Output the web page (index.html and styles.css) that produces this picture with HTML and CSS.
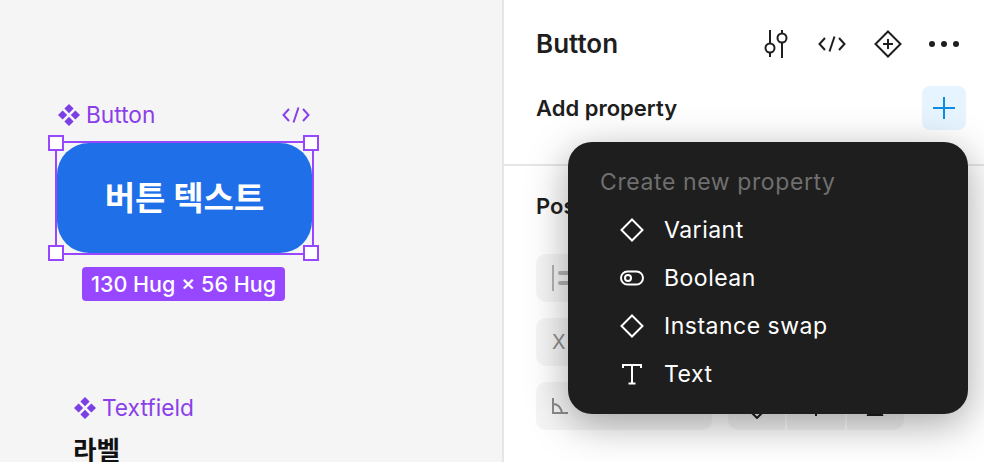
FILE: index.html
```html
<!DOCTYPE html>
<html lang="ko">
<head>
  <meta charset="UTF-8">
  <meta name="viewport" content="width=device-width, initial-scale=1.0">
  <title>Button</title>
  <link rel="stylesheet" href="styles.css">
</head>
<body>
  <!-- Canvas -->
  <main class="canvas">
    <div class="node-label button-label">
      <svg class="comp-icon" viewBox="0 0 22 22"><path d="M11 0l4.600 4.600L11 9.200 6.400 4.600zM4.600 6.400L9.200 11l-4.600 4.600L0 11zM17.400 6.400L22 11l-4.600 4.600L12.800 11zM11 12.800l4.600 4.600L11 22l-4.600-4.600z"/></svg>
      <span>Button</span>
    </div>
    <svg class="node-code" viewBox="0 0 28 18"><path d="M7 3L1.500 9 7 15M21 3l5.500 6L21 15M16.500 1.500l-5 15"/></svg>

    <div class="selection">
      <button class="blue-button">버튼 텍스트</button>
      <span class="handle tl"></span>
      <span class="handle tr"></span>
      <span class="handle bl"></span>
      <span class="handle br"></span>
    </div>
    <div class="size-tag">130 Hug × 56 Hug</div>

    <div class="node-label field-label">
      <svg class="comp-icon" viewBox="0 0 22 22"><path d="M11 0l4.600 4.600L11 9.200 6.400 4.600zM4.600 6.400L9.200 11l-4.600 4.600L0 11zM17.400 6.400L22 11l-4.600 4.600L12.800 11zM11 12.800l4.600 4.600L11 22l-4.600-4.600z"/></svg>
      <span>Textfield</span>
    </div>
    <div class="field-title">라벨</div>
  </main>

  <!-- Right panel -->
  <aside class="panel">
    <header class="panel-head">
      <h1>Button</h1>
      <div class="tools">
        <span class="tool"><svg width="28" height="30" viewBox="0 0 28 30"><path d="M8 1v13M8 24v4M20 1v3M20 14v15"/><circle cx="8" cy="19" r="4.500"/><circle cx="20" cy="9" r="4.500"/></svg></span>
        <span class="tool"><svg width="28" height="18" viewBox="0 0 28 18"><path d="M7 3L1.500 9 7 15M21 3l5.500 6L21 15M16.500 1.500l-5 15"/></svg></span>
        <span class="tool"><svg width="28" height="28" viewBox="0 0 28 28"><path d="M14 1.500L26.500 14 14 26.500 1.500 14zM14 9v10M9 14h10"/></svg></span>
        <span class="tool"><svg class="dots" width="32" height="8" viewBox="0 0 32 8"><circle cx="4" cy="4" r="3"/><circle cx="16" cy="4" r="3"/><circle cx="28" cy="4" r="3"/></svg></span>
      </div>
    </header>

    <div class="add-row">
      <h2>Add property</h2>
      <span class="add-btn"><svg width="24" height="24" viewBox="0 0 24 24"><path d="M12 1v22M1 12h22"/></svg></span>
    </div>

    <section class="position">
      <h2>Position</h2>
      <div class="field-row">
        <div class="input wide">
          <svg class="align-icon" width="22" height="26" viewBox="0 0 22 26"><path d="M1 0v26"/><rect x="6" y="6" width="16" height="4" rx="2"/><rect x="6" y="16" width="16" height="4" rx="2"/></svg>
        </div>
      </div>
      <div class="field-row">
        <div class="input wide"><span class="x-letter">X</span></div>
      </div>
      <div class="field-row">
        <div class="input wide">
          <svg class="angle" width="16" height="16" viewBox="0 0 16 16"><path d="M1 0v15h15M1 6c5 0 8 4 9 9"/></svg>
        </div>
        <div class="segments">
          <span class="seg"><svg width="26" height="26" viewBox="0 0 26 26"><path d="M13 1l12 12-12 12L1 13z"/></svg></span>
          <span class="seg"><svg width="26" height="26" viewBox="0 0 26 26"><path d="M13 1v22M2 12h22"/></svg></span>
          <span class="seg"><svg width="26" height="26" viewBox="0 0 26 26"><path d="M6 2h14M13 6l7 16H6z"/></svg></span>
        </div>
      </div>
    </section>

    <!-- Property menu -->
    <div class="menu">
      <div class="menu-title">Create new property</div>
      <div class="menu-item">
        <span class="menu-icon"><svg width="24" height="24" viewBox="0 0 24 24"><path d="M12 1.500L22.500 12 12 22.500 1.500 12z"/></svg></span>
        Variant
      </div>
      <div class="menu-item">
        <span class="menu-icon"><svg width="24" height="16" viewBox="0 0 24 16"><rect x="1" y="1.500" width="22" height="13" rx="6.500"/><circle cx="8" cy="8" r="3"/></svg></span>
        Boolean
      </div>
      <div class="menu-item">
        <span class="menu-icon"><svg width="24" height="24" viewBox="0 0 24 24"><path d="M12 1.500L22.500 12 12 22.500 1.500 12z"/></svg></span>
        Instance swap
      </div>
      <div class="menu-item">
        <span class="menu-icon"><svg width="22" height="22" viewBox="0 0 22 22"><path d="M2 5V2h18v3M11 2v18M7.500 20.500h7"/></svg></span>
        Text
      </div>
    </div>
  </aside>
</body>
</html>
```

FILE: styles.css
```css
/* Page layout */
body {
  display: flex;
  width: 984px;
  height: 462px;
  margin: 0;
  overflow: hidden;
  font-family: Inter, "Noto Sans CJK KR", sans-serif;
  color: #1e1e1e;
  background-color: #fff;
}

/* Canvas: everything here sits at its own place on the free canvas */
.canvas {
  position: relative;
  flex: 0 0 502px;
  height: 462px;
  background-color: #f5f5f5;
  border-right: 2px solid #e6e6e6;
}

.node-label {
  position: absolute;
  display: flex;
  align-items: center;
  gap: 6px;
  font-size: 22.7px;
  line-height: 28px;
  color: #8a3fe8;
}

.button-label {
  left: 58px;
  top: 101px;
}

.field-label {
  left: 74px;
  top: 394px;
}

.comp-icon {
  width: 22px;
  height: 22px;
  fill: #7b3fe4;
}

.node-code {
  position: absolute;
  left: 282px;
  top: 106px;
  width: 28px;
  height: 18px;
  fill: none;
  stroke: #8a3fe8;
  stroke-width: 2;
}

.selection {
  position: absolute;
  left: 55px;
  top: 141px;
  width: 255px;
  height: 110px;
  border: 2px solid #9747ff;
}

.blue-button {
  display: block;
  width: 100%;
  height: 100%;
  padding: 0 0 4px;
  border: none;
  border-radius: 32px;
  font-family: inherit;
  font-size: 33px;
  font-weight: 700;
  color: #fff;
  background-color: #1f6fe9;
}

.handle {
  position: absolute;
  width: 12px;
  height: 12px;
  background-color: #fff;
  border: 2px solid #9747ff;
}

.tl { left: -9px; top: -8px; }
.tr { right: -7px; top: -8px; }
.bl { left: -9px; bottom: -8px; }
.br { right: -7px; bottom: -8px; }

.size-tag {
  position: absolute;
  left: 82px;
  top: 267px;
  width: 203px;
  height: 34px;
  font-size: 21.5px;
  font-weight: 500;
  line-height: 35px;
  text-align: center;
  color: #fff;
  background-color: #9747ff;
  border-radius: 4px;
}

.field-title {
  position: absolute;
  left: 73px;
  top: 433px;
  font-size: 25.6px;
  font-weight: 700;
  line-height: 36px;
  color: #111;
}

/* Right panel */
.panel {
  position: relative;
  flex: 1;
  height: 462px;
}

h1 {
  margin: 0 0 2px;
  font-size: 26px;
  font-weight: 600;
}

h2 {
  margin: 0;
  font-size: 22px;
  font-weight: 600;
}

.panel-head {
  display: flex;
  align-items: center;
  justify-content: space-between;
  height: 88px;
  padding: 0 12px 0 32px;
}

.tools {
  display: flex;
}

.tool {
  display: flex;
  align-items: center;
  justify-content: center;
  width: 56px;
}

.tool svg {
  fill: none;
  stroke: #1e1e1e;
  stroke-width: 2;
}

.tool .dots {
  fill: #1e1e1e;
  stroke: none;
}

.add-row {
  display: flex;
  align-items: center;
  justify-content: space-between;
  height: 44px;
  margin-top: -2px;
  padding: 0 18px 0 32px;
}

.add-btn {
  display: flex;
  align-items: center;
  justify-content: center;
  width: 44px;
  height: 44px;
  background-color: #e5f4ff;
  border-radius: 8px;
}

.add-btn svg {
  fill: none;
  stroke: #0d8ce0;
  stroke-width: 2;
}

.position {
  margin-top: 34px;
  padding: 28px 32px 0;
  border-top: 2px solid #e6e6e6;
}

.position h2 {
  line-height: 24px;
  margin-bottom: 36px;
}

.field-row {
  display: flex;
  gap: 16px;
  margin-bottom: 16px;
}

.input {
  display: flex;
  align-items: center;
  height: 48px;
  padding-left: 16px;
  background-color: #f5f5f5;
  border-radius: 10px;
}

.wide {
  width: 160px;
}

.align-icon {
  stroke: #b3b3b3;
  stroke-width: 2;
  fill: #b3b3b3;
}

.align-icon rect {
  stroke: none;
}

.x-letter {
  font-size: 20px;
  color: #8c8c8c;
}

.angle {
  fill: none;
  stroke: #8c8c8c;
  stroke-width: 2;
}

.segments {
  display: flex;
  gap: 2px;
  width: 176px;
  height: 48px;
  border-radius: 10px;
  overflow: hidden;
}

.seg {
  display: flex;
  align-items: center;
  justify-content: center;
  flex: 1;
  background-color: #f5f5f5;
}

.seg svg {
  fill: none;
  stroke: #1e1e1e;
  stroke-width: 2;
}

/* Dark dropdown, lies over the panel */
.menu {
  position: absolute;
  left: 64px;
  top: 142px;
  width: 400px;
  height: 272px;
  padding: 16px 32px;
  box-sizing: border-box;
  color: #fff;
  background-color: #1e1e1e;
  border-radius: 24px;
  box-shadow: 0 10px 40px rgba(0, 0, 0, 0.35);
}

.menu-title {
  height: 48px;
  font-size: 23px;
  line-height: 48px;
  letter-spacing: 0.6px;
  color: #6f6f6f;
}

.menu-item {
  display: flex;
  align-items: center;
  gap: 20px;
  height: 48px;
  padding-left: 20px;
  font-size: 23px;
  letter-spacing: 0.5px;
}

.menu-icon {
  display: flex;
  align-items: center;
  justify-content: center;
  width: 24px;
}

.menu-icon svg {
  fill: none;
  stroke: #fff;
  stroke-width: 2;
}
```
